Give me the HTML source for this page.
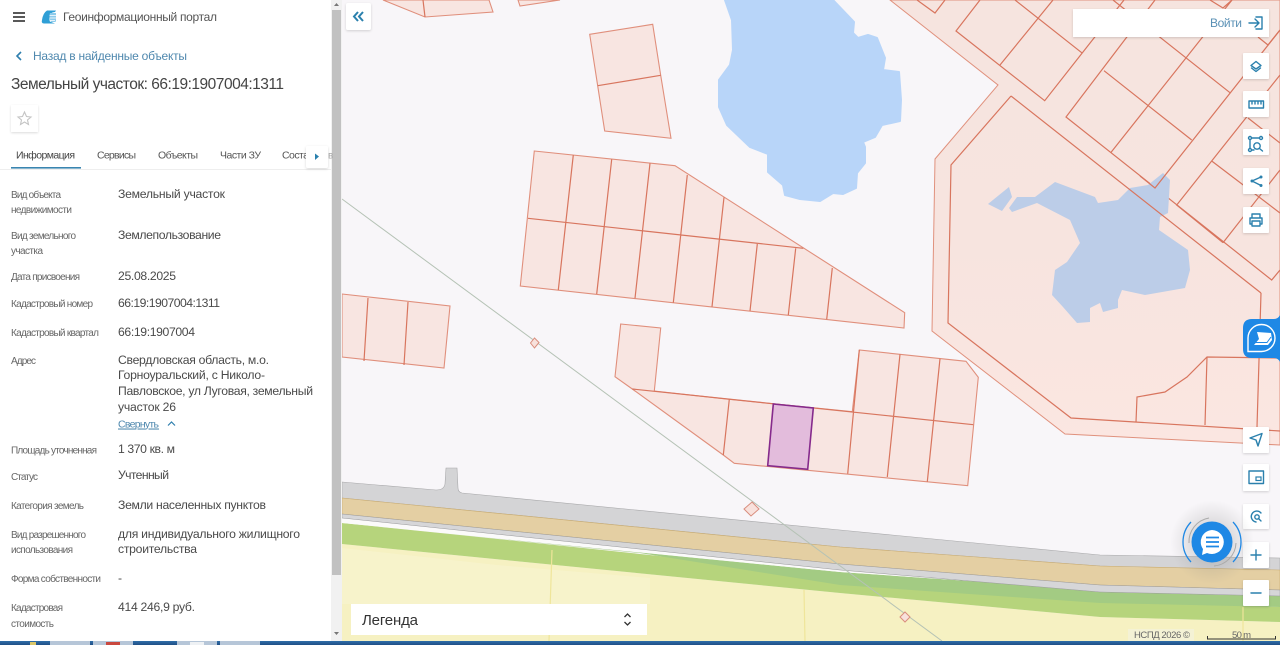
<!DOCTYPE html>
<html lang="ru"><head><meta charset="utf-8"><title>Геоинформационный портал</title>
<style>
html,body{margin:0;padding:0;width:1280px;height:645px;overflow:hidden;background:#f8f6f9}
svg{display:block;font-family:"Liberation Sans","Noto Sans CJK SC",sans-serif;filter:blur(.3px)}
.p{fill:#f8e5e1;stroke:#e08f7c;stroke-width:1.1}
.l{fill:none;stroke:#d8755e;stroke-width:1.2}
.lb{font-size:10px;fill:#666}
.v{font-size:12.2px;fill:#4a4a4a}
.ic{fill:none;stroke:#2a80ad;stroke-width:1.4;stroke-linecap:round;stroke-linejoin:round}
.b{fill:#fff;filter:url(#s)}
</style></head><body>
<svg width="1280" height="645" viewBox="0 0 1280 645" xmlns="http://www.w3.org/2000/svg">
<defs>
<filter id="s" x="-20%" y="-20%" width="140%" height="140%"><feDropShadow dx="0" dy="1" stdDeviation="1.2" flood-color="#000" flood-opacity=".16"/></filter>
<radialGradient id="g"><stop offset="0" stop-color="#777" stop-opacity=".4"/><stop offset="1" stop-color="#888" stop-opacity="0"/></radialGradient>
<linearGradient id="tb" x1="0" y1="0" x2="0" y2="1"><stop offset="0" stop-color="#2f6ea8"/><stop offset="1" stop-color="#1f4f86"/></linearGradient>
<linearGradient id="pk" x1="0" y1="0" x2="0" y2="1"><stop offset="0" stop-color="#f6e4df"/><stop offset=".55" stop-color="#f7e4df"/><stop offset="1" stop-color="#fbe6e1"/></linearGradient>
</defs>
<rect width="1280" height="645" fill="#f8f6f9"/>

<!-- bottom strips -->
<path fill="#f6f1c2" d="M342 544L840 593L1100 617L1280 622V645H342Z"/>
<path fill="#f8f4cf" d="M342 548L497 565V604H342ZM497 565L650 578V604H497Z" opacity=".7"/>
<path fill="#b6d47c" d="M342 523L450 534L840 575L1100 599L1280 607V622L1100 617L840 593L342 544Z"/>
<path fill="#a3cb83" d="M440 533L840 572L1100 590L1280 594V607L1100 603L840 585L640 553Z"/>
<path fill="#fbfafa" d="M342 518L840 570L1100 592L1280 596V594L1100 590L840 572L342 523Z"/>
<path fill="#d4d4d6" stroke="#a8a8aa" stroke-width=".6" d="M342 482L436 490Q444 490 445 484L446 468H457L458 488Q458 492 462 493L840 530L1100 555L1280 558V571L1100 566L840 547L342 498Z"/>
<path fill="#e4cfa3" stroke="#c9ab6f" stroke-width=".6" d="M342 498L840 547L1100 566L1280 570V590L1100 585L840 564L342 514Z"/>
<path fill="#d6d6d8" stroke="#9a9a9c" stroke-width=".5" d="M342 514L840 564L1100 585L1280 590V596L1100 592L840 570L342 518Z"/>
<path fill="none" stroke="#efe59a" stroke-width="1.2" d="M552 550L549 641M804 590L805 641M1243 607V641"/>

<!-- water left -->
<path fill="#b8d5f9" stroke="#b8d5f9" stroke-width="2" stroke-linejoin="round" d="M725 0L732 20L733 50L730 65L719 80V107L727 125L750 147L768 154V172L783 185L785 195L800 199L820 201L833 193L843 194L856 188L857 173L865 163V147L863 142L875 137L882 125L900 121L901 100L899 72L883 70L885 58L877 38L868 35L858 38L853 33L854 22L833 0Z"/>

<!-- right big parcels -->
<path fill="url(#pk)" stroke="#e0917d" stroke-width="1" d="M890 0L998 85L935 159L932 331L1065 434L1280 445V0Z"/>
<path class="l" d="M1011 96L951 165L948 323L1071 418L1280 431"/>
<path class="l" d="M1261 293L1257 427"/>
<path class="l" d="M1136 422L1137 397L1165 392L1187 377L1207 357L1280 358M1207 357L1205 425"/>
<path class="l" d="M917 0L935 13L945 0M980 0L956 31L1044.7 100.7L1094 38L1124 0M1015 0L1081.7 52.7M1000 65L1053 0"/>
<path class="l" d="M1155 0L1066 117L1271.7 280L1280 270M1113 0L1230 92.7M1104 70.7L1191.7 140M1110.7 152.7L1232 0"/>
<path class="l" d="M1280 75L1176.7 205L1223 242.7M1223 242.7L1280 170M1211.7 161L1280 213M1248 118L1280 143M1258 37L1268 45L1280 30M1210 0L1223 8L1232 0"/>
<!-- water right -->
<path fill="#bccde8" d="M1009 208L1017 197L1035 197L1055 182L1095 197L1098 203L1118 200L1130 188L1148 185L1163 173L1170 180L1168 213L1160 217L1159 230L1188 250L1190 270L1185 288L1145 295L1122 290L1118 300L1118 308L1103 312L1100 303L1090 308L1090 322L1077 323L1063 307L1052 295L1055 270L1067 262L1080 243L1070 220L1037 203L1012 212Z"/>
<path fill="#bccde8" d="M1009 187L988 204L1002 211L1012 197Z"/>
<path class="l" d="M1011 96L1261 293"/>
<path class="l" d="M1140 176L1155 188L1280 30"/>

<!-- top left bits -->
<path class="p" d="M383 0L425 17L493 12L489 0Z"/><path class="l" d="M423 0L425 17"/>
<path class="p" d="M518 0L520 6L560 0Z"/>

<!-- upper small block -->
<path class="p" d="M589.7 34.3L652.7 24.3L660.7 75.3L671 138.3L604.7 131Z"/>
<path class="l" d="M597.7 85.7L660.7 75.3"/>

<!-- middle block -->
<path class="p" d="M534.3 151L675 165.7L904.7 312.7L904 328L520.3 286Z"/>
<path class="l" d="M528 218.3L803.3 248.3M573.3 155L558.3 290M611.7 159.3L596.7 294M650 163.3L635 298.3M687.3 175L673.3 302.7M724 197.3L712 306.7M757.3 244L750 311M795.7 248.3L788.3 315M832.3 268L826.7 319.3"/>

<!-- left block -->
<path class="p" d="M342 294L450 306L444 368L342 357Z"/>
<path class="l" d="M368 298L364 361M408 302L404 365"/>

<!-- lower block -->
<path class="p" d="M620.7 324L660.7 328L654.3 391L729.3 399.3L852.3 411.7L859.3 350L966 361.3L978.3 377.3L967.7 485.7L734.3 463.3L723.3 455L632.3 389L615 376.7Z"/>
<path class="l" d="M632.3 389L973.3 424.7M729.3 399.3L723.3 455M859.3 350L847.7 473.7M900 354.3L887.3 477M940 358.7L927.3 481.7"/>
<path fill="#e3bcdc" stroke="#852a8c" stroke-width="1.6" d="M773.3 404L813.3 408L807.7 469.3L767.7 465.7Z"/>

<!-- power line -->
<path fill="none" stroke="#b5c2b5" stroke-width="1" d="M342 199L942 641"/>
<path fill="#f8e1dc" stroke="#d98d7d" d="M534.5 338L539 342.5L534.5 348L530.5 343Z"/>
<path fill="#f8e1dc" stroke="#d98d7d" d="M752 502L759 509L751 516L744 509Z"/>
<path fill="#f8e1dc" stroke="#d98d7d" d="M905 612L910 617L905 622L900 617Z"/>

<!-- taskbar -->
<rect y="641" width="1280" height="4" fill="url(#tb)"/>
<path fill="#b6c6d8" d="M50 641H90V645H50ZM93 641H133V645H93ZM177 641H217V645H177ZM220 641H260V645H220Z"/>
<rect x="30" y="642" width="6" height="3" fill="#d9c66a"/><rect x="106" y="642" width="14" height="3" fill="#c9483f"/><rect x="190" y="642" width="14" height="3" fill="#eef1f4"/>

<!-- panel -->
<rect width="331" height="641" fill="#fff"/>
<rect x="331" width="11" height="641" fill="#f1f1f1"/>
<rect x="332" y="10" width="9" height="565" fill="#c1c1c1"/>
<path fill="#777" d="M334 6L336.5 3L339 6ZM334 632L336.5 635L339 632Z"/>

<path fill="none" stroke="#222" stroke-width="1.5" d="M13 13H25M13 17H25M13 21H25"/>
<path fill="#2f9fd6" d="M47 10.500H56L55 12Q50 12 49.500 17T51 22L55 23.500H44Q41 23.500 42 20Q43 13 47 10.500Z"/>
<path fill="#8ccbeb" d="M50 13H56V21Q56 22 54 22H51Q48.500 17 50 13Z"/>
<path stroke="#fff" stroke-width=".7" d="M49.500 15.500H56M49.500 18H56M50 20.500H55"/>
<text x="63" y="21" font-size="12" fill="#555" textLength="154" lengthAdjust="spacing">Геоинформационный портал</text>

<path fill="none" stroke="#2f7fae" stroke-width="1.6" d="M21 52L17 56L21 60"/>
<text x="33" y="60" font-size="12" fill="#4f88ae" textLength="154" lengthAdjust="spacing">Назад в найденные объекты</text>
<text x="11" y="89" font-size="15.500" fill="#444" textLength="273" lengthAdjust="spacing">Земельный участок: 66:19:1907004:1311</text>

<rect x="11" y="105" width="27" height="27" class="b" style="opacity:.9"/>
<path fill="none" stroke="#c4c4c4" stroke-width="1.1" d="M24.500 112L26.500 116.500L31 117L27.500 120L28.500 124.500L24.500 122L20.500 124.500L21.500 120L18 117L22.500 116.500Z"/>

<text x="16" y="158.500" font-size="10.500" fill="#444" textLength="59">Информация</text>
<text x="97" y="158.500" font-size="10.500" fill="#555" textLength="39">Сервисы</text>
<text x="158" y="158.500" font-size="10.500" fill="#555" textLength="40">Объекты</text>
<text x="220" y="158.500" font-size="10.500" fill="#555" textLength="41">Части ЗУ</text>
<text x="282" y="158.500" font-size="10.500" fill="#555" textLength="27">Соста</text>
<text x="328" y="158.500" font-size="10" fill="#aaa">в</text>
<rect x="0" y="169" width="331" height="1" fill="#eee"/>
<rect x="11" y="167" width="70" height="1.600" fill="#3a85b0"/>
<rect x="306" y="146" width="22" height="22" rx="2" class="b"/>
<path fill="#2a80ad" d="M315 153.500L319 156.500L315 160Z"/>

<text class="lb" x="11" y="198" textLength="50">Вид объекта</text>
<text class="lb" x="11" y="213" textLength="61">недвижимости</text>
<text class="v" x="118" y="198" textLength="107">Земельный участок</text>
<text class="lb" x="11" y="239" textLength="65">Вид земельного</text>
<text class="lb" x="11" y="254" textLength="32">участка</text>
<text class="v" x="118" y="239" textLength="103">Землепользование</text>
<text class="lb" x="11" y="280" textLength="69">Дата присвоения</text>
<text class="v" x="118" y="280" textLength="58">25.08.2025</text>
<text class="lb" x="11" y="307" textLength="82">Кадастровый номер</text>
<text class="v" x="118" y="307" textLength="102">66:19:1907004:1311</text>
<text class="lb" x="11" y="336" textLength="88">Кадастровый квартал</text>
<text class="v" x="118" y="336" textLength="77">66:19:1907004</text>
<text class="lb" x="11" y="364" textLength="25">Адрес</text>
<text class="v" x="118" y="364" textLength="151">Свердловская область, м.о.</text>
<text class="v" x="118" y="379" textLength="147">Горноуральский, с Николо-</text>
<text class="v" x="118" y="395" textLength="195">Павловское, ул Луговая, земельный</text>
<text class="v" x="118" y="411" textLength="58">участок 26</text>
<text x="118" y="427.500" font-size="10.500" fill="#4f88ae" text-decoration="underline" textLength="41">Свернуть</text>
<path fill="none" stroke="#2f7fae" stroke-width="1.2" d="M168 425.500L171.500 422L175 425.500"/>
<text class="lb" x="11" y="453.500" textLength="86">Площадь уточненная</text>
<text class="v" x="118" y="453" textLength="57">1 370 кв. м</text>
<text class="lb" x="11" y="480" textLength="27">Статус</text>
<text class="v" x="118" y="479" textLength="51">Учтенный</text>
<text class="lb" x="11" y="509" textLength="73">Категория земель</text>
<text class="v" x="118" y="509" textLength="148">Земли населенных пунктов</text>
<text class="lb" x="11" y="538" textLength="75">Вид разрешенного</text>
<text class="lb" x="11" y="553" textLength="62">использования</text>
<text class="v" x="118" y="538" textLength="182">для индивидуального жилищного</text>
<text class="v" x="118" y="553" textLength="79">строительства</text>
<text class="lb" x="11" y="582" textLength="90">Форма собственности</text>
<text class="v" x="118" y="582">-</text>
<text class="lb" x="11" y="611" textLength="52">Кадастровая</text>
<text class="lb" x="11" y="627" textLength="43">стоимость</text>
<text class="v" x="118" y="611" textLength="77">414 246,9 руб.</text>

<!-- collapse -->
<rect x="346" y="3" width="25" height="27" rx="2" class="b"/>
<path fill="none" stroke="#2a80ad" stroke-width="2" d="M358 12L354 16.500L358 21M363 12L359 16.500L363 21"/>

<!-- login -->
<rect x="1073" y="9" width="196" height="28" class="b"/>
<text x="1210" y="27" font-size="12" fill="#5a90b5" textLength="32">Войти</text>
<path class="ic" d="M1249 23H1259M1255 19L1259 23L1255 27M1256 17H1262V29H1256"/>

<!-- tool buttons -->
<rect x="1243" y="53" width="26" height="26" rx="1" class="b"/>
<path class="ic" stroke-width="1" d="M1256 61.500L1261 65.500L1256 69L1251 65.500ZM1251.500 68L1256 71.500L1260.500 68"/>
<rect x="1243" y="91" width="26" height="26" rx="1" class="b"/>
<path class="ic" d="M1249 101H1263.500V108H1249ZM1252 101V104M1255 101V104M1258 101V104M1261 101V104"/>
<rect x="1243" y="129" width="26" height="26" rx="1" class="b"/>
<path class="ic" stroke-width="1" d="M1252 138H1259M1250 140V148M1252 150H1254"/><circle class="ic" stroke-width="1" cx="1250" cy="138" r="1.500"/><circle class="ic" stroke-width="1" cx="1261" cy="138" r="1.500"/><circle class="ic" stroke-width="1" cx="1250" cy="150" r="1.500"/><circle class="ic" stroke-width="1" cx="1257" cy="146" r="3.200"/><path class="ic" stroke-width="1" d="M1259.500 148.500L1262.500 151"/>
<rect x="1243" y="168" width="26" height="26" rx="1" class="b"/>
<path class="ic" stroke-width="1" d="M1261 177L1252 181L1261 185.500"/><circle cx="1261" cy="177" r="1.500" fill="#2a80ad"/><circle cx="1252" cy="181" r="1.500" fill="#2a80ad"/><circle cx="1261" cy="185.500" r="1.500" fill="#2a80ad"/>
<rect x="1243" y="207" width="26" height="26" rx="1" class="b"/>
<path class="ic" d="M1252 218V214H1260V218M1252 224H1250V218H1262V224H1260M1252 221H1260V226H1252Z"/>

<!-- blue tab -->
<path fill="#1e88e5" d="M1280 315V362Q1278 358 1274 358H1252Q1243 358 1243 349V328Q1243 319 1252 319H1274Q1278 319 1280 315Z"/>
<path fill="none" stroke="#fff" stroke-width="1.400" d="M1248 351V338A13.500 13.500 0 1 1 1261.500 351.500H1248Z"/>
<path fill="#fff" d="M1257 332L1271 333L1272 340L1268 345L1254 345L1259 339L1257 332Z"/>
<path fill="none" stroke="#1e88e5" stroke-width="1" d="M1254 342.500H1267L1271 337"/>

<!-- lower buttons -->
<rect x="1243" y="427" width="26" height="26" rx="1" class="b"/>
<path class="ic" stroke-width="1.200" d="M1250 438L1262 433.500L1258 446L1256 440Z"/>
<rect x="1243" y="464" width="26" height="27" rx="1" class="b"/>
<path class="ic" d="M1249 471H1263.500V483.500H1249Z"/><rect x="1256" y="477" width="5" height="3.500" fill="none" stroke="#2a80ad" stroke-width="1.200"/>
<rect x="1243" y="504" width="26" height="25" rx="1" class="b"/>
<circle class="ic" stroke-width="1" cx="1257" cy="517" r="2.200"/><path class="ic" stroke-width="1" d="M1261 513A5.500 5.500 0 1 0 1256 522M1258.500 518.500L1261 521"/>
<rect x="1243" y="542" width="26" height="26" rx="1" class="b"/>
<path class="ic" stroke-width="1.800" d="M1256 550V560M1251 555H1261"/>
<rect x="1243" y="580" width="26" height="26" rx="1" class="b"/>
<path class="ic" stroke-width="1.800" d="M1251 593H1261"/>

<!-- chat -->
<circle cx="1212" cy="542" r="42" fill="url(#g)"/>
<circle cx="1212" cy="542" r="20.500" fill="#1e88e5"/>
<path fill="none" stroke="#1e88e5" stroke-width="1.300" d="M1191 522A29 29 0 0 0 1191 562M1233 522A29 29 0 0 1 1233 562"/>
<path fill="none" stroke="#aaa" stroke-width="1" d="M1189 543A24 24 0 0 1 1209 518M1236 543A24 24 0 0 1 1214 566"/>
<path fill="#fff" d="M1212 530A12 12 0 1 1 1207 553L1202 555L1203 549A12 12 0 0 1 1212 530Z"/>
<path stroke="#1e88e5" stroke-width="1.800" d="M1206 537.500H1219M1206 542H1219M1206 546.500H1219"/>

<!-- legend -->
<rect x="351" y="604" width="296" height="31" fill="#fff"/>
<text x="362" y="625" font-size="15" fill="#333" textLength="56">Легенда</text>
<path fill="none" stroke="#333" stroke-width="1.300" d="M624.500 617L627.500 614L630.500 617M624.500 622L627.500 625L630.500 622"/>

<!-- scale -->
<rect x="1128" y="629" width="66" height="12" fill="#f4f3da" opacity=".8"/>
<text x="1134" y="638" font-size="9.500" fill="#666" textLength="56">НСПД 2026 ©</text>
<text x="1232" y="638" font-size="9.500" fill="#666" textLength="19">50 m</text>
<path fill="none" stroke="#333" stroke-width="1" d="M1207.500 636V639H1275.500V636"/>
</svg>
</body></html>
